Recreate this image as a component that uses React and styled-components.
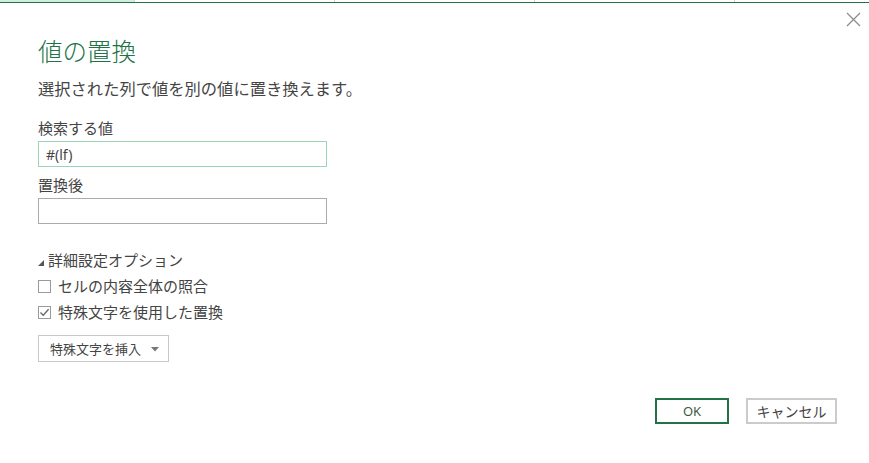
import styled, { createGlobalStyle } from "styled-components"

const GlobalStyle = createGlobalStyle`
    html, body {
        margin: 0;
        padding: 0;
        background: #fff;
    }
    body {
        font-family: "Noto Sans CJK JP", "Noto Sans", sans-serif;
        color: #444;
    }
`

const sheetCells = [135, 200, 200, 200, 200]

export default function App() {
    return (
        <>
            <GlobalStyle />
            <Page>
                <SheetStrip>
                    {sheetCells.map((w, i) => (
                        <SheetCell key={i} $w={w} $active={i === 0} />
                    ))}
                </SheetStrip>
                <Dialog>
                    <CloseBtn aria-label="閉じる">
                        <svg width="15" height="15" viewBox="0 0 15 15">
                            <path d="M1 1 L14 14 M14 1 L1 14" stroke="#8a8a8a" strokeWidth="1.2" fill="none" />
                        </svg>
                    </CloseBtn>
                    <Title>値の置換</Title>
                    <Subtitle>選択された列で値を別の値に置き換えます。</Subtitle>

                    <Label>検索する値</Label>
                    <TextInput type="text" defaultValue="#(lf)" $focused />
                    <Label $top={8}>置換後</Label>
                    <TextInput type="text" />

                    <Expander>
                        <svg width="6" height="6" viewBox="0 0 6 6">
                            <polygon points="0,6 6,6 6,0" fill="#555" />
                        </svg>
                        詳細設定オプション
                    </Expander>

                    <CheckRow $top={6}>
                        <Box />
                        セルの内容全体の照合
                    </CheckRow>
                    <CheckRow $top={6}>
                        <Box>
                            <svg width="11" height="11" viewBox="0 0 11 11">
                                <path d="M1.5 5.5 L4.2 8.3 L9.6 2.2" stroke="#666" strokeWidth="1.3" fill="none" />
                            </svg>
                        </Box>
                        特殊文字を使用した置換
                    </CheckRow>

                    <InsertBtn>
                        特殊文字を挿入
                        <svg width="8" height="5" viewBox="0 0 8 5">
                            <polygon points="0,0 8,0 4,4.5" fill="#777" />
                        </svg>
                    </InsertBtn>

                    <Footer>
                        <OkBtn>OK</OkBtn>
                        <CancelBtn>キャンセル</CancelBtn>
                    </Footer>
                </Dialog>
            </Page>
        </>
    )
}

const Page = styled.div`
    width: 869px;
    height: 463px;
    overflow: hidden;
    display: flex;
    flex-direction: column;
`

const SheetStrip = styled.div`
    display: flex;
    height: 2px;
    border-bottom: 1px solid #217346;
`

const SheetCell = styled.div`
    width: ${p => p.$w}px;
    flex-shrink: 0;
    box-sizing: border-box;
    background: ${p => (p.$active ? "#d2eedd" : "#fff")};
    border-right: 1px solid #d4d4d4;
`

const Dialog = styled.div`
    position: relative;
    flex: 1;
    padding: 32px 38px 0 38px;
    display: flex;
    flex-direction: column;
    align-items: flex-start;
`

const CloseBtn = styled.button`
    position: absolute;
    top: 9px;
    right: 8px;
    width: 15px;
    height: 15px;
    padding: 0;
    border: none;
    background: none;
    display: flex;
    cursor: pointer;
`

const Title = styled.h1`
    margin: 0;
    font-size: 24.5px;
    line-height: 32px;
    font-weight: 300;
    color: #217346;
`

const Subtitle = styled.p`
    margin: 9px 0 0 0;
    font-size: 16.3px;
    line-height: 24px;
    color: #444;
`

const Label = styled.div`
    margin-top: ${p => p.$top ?? 18}px;
    font-size: 15px;
    line-height: 20px;
    color: #444;
`

const TextInput = styled.input`
    margin-top: 3px;
    width: 289px;
    height: 26px;
    box-sizing: border-box;
    border: 1px solid ${p => (p.$focused ? "#9dd6b6" : "#ababab")};
    padding: 0 7px;
    font-family: "Noto Sans", "Noto Sans CJK JP", sans-serif;
    font-size: 14px;
    color: #444;
    outline: none;
`

const Expander = styled.div`
    margin-top: 26px;
    display: flex;
    align-items: center;
    gap: 4px;
    font-size: 15px;
    line-height: 20px;
    color: #444;

    svg {
        margin-top: 5px;
    }
`

const CheckRow = styled.label`
    margin-top: ${p => p.$top}px;
    display: flex;
    align-items: center;
    gap: 7px;
    font-size: 15px;
    line-height: 20px;
    color: #444;
`

const Box = styled.span`
    width: 13px;
    height: 13px;
    box-sizing: border-box;
    border: 1px solid #9a9a9a;
    display: flex;
    align-items: center;
    justify-content: center;
    background: #fff;
`

const InsertBtn = styled.button`
    margin-top: 13px;
    width: 131px;
    height: 27px;
    box-sizing: border-box;
    border: 1px solid #c8c8c8;
    background: #fff;
    padding: 0 0 0 11px;
    display: flex;
    align-items: center;
    gap: 10px;
    font-family: "Noto Sans CJK JP", sans-serif;
    font-size: 13px;
    color: #444;
    cursor: pointer;

    svg {
        margin-top: 1px;
    }
`

const Footer = styled.div`
    margin-top: 36px;
    align-self: flex-end;
    margin-right: -6px;
    display: flex;
    gap: 17px;
`

const OkBtn = styled.button`
    width: 74px;
    height: 26px;
    box-sizing: border-box;
    border: 2px solid #217346;
    background: #fff;
    font-family: "Noto Sans", sans-serif;
    font-size: 13px;
    color: #3a5a44;
    cursor: pointer;
`

const CancelBtn = styled.button`
    width: 91px;
    height: 26px;
    box-sizing: border-box;
    border: 2px solid #cbcbcb;
    background: #fff;
    font-family: "Noto Sans CJK JP", sans-serif;
    font-size: 14px;
    color: #444;
    cursor: pointer;
`
